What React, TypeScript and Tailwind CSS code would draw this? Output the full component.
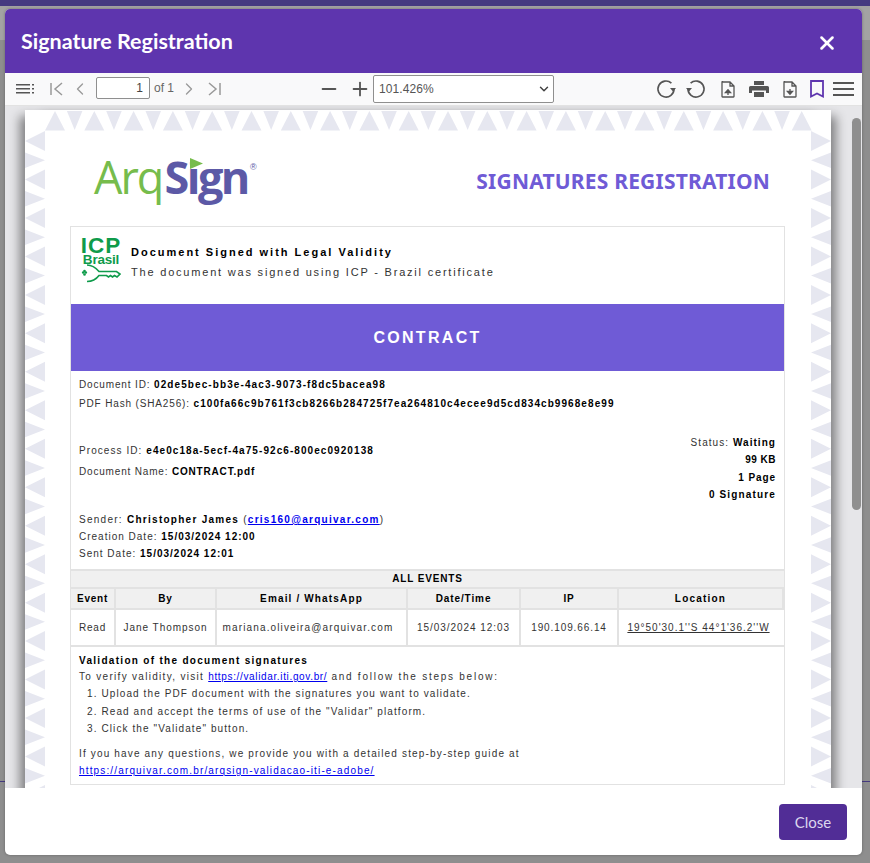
import { ChevronDown, ChevronLeft, ChevronRight, Minus, Plus, X } from 'lucide-react';

const columns = [
  { label: 'Event', track: 'tracking-[0.75px]' },
  { label: 'By', track: 'tracking-[0.75px]' },
  { label: 'Email / WhatsApp', track: 'tracking-[1.15px]' },
  { label: 'Date/Time', track: 'tracking-[0.9px]' },
  { label: 'IP', track: 'tracking-[0.75px]' },
  { label: 'Location', track: 'tracking-[1.2px]' },
];
const values = [
  { label: 'Read', track: 'tracking-[0.75px]' },
  { label: 'Jane Thompson', track: 'tracking-[0.95px]' },
  { label: 'mariana.oliveira@arquivar.com', track: 'pr-[7px] tracking-[1.13px]' },
  { label: '15/03/2024 12:03', track: 'tracking-[0.95px]' },
  { label: '190.109.66.14', track: 'tracking-[0.9px]' },
];

// the triangle frame printed on the pdf page
function FrameTriangles() {
  const top = Array.from({ length: 20 }, (_, i) => 20 + i * 39.3);
  const side = Array.from({ length: 18 }, (_, i) => 31 + i * 38.47);
  return (
    <svg className="absolute inset-0" width="806" height="760" viewBox="0 0 806 760" fill="#e6e7f0">
      {top.map((x) => (
        <polygon key={x} points={`${x},20.500 ${x + 10},1 ${x + 20},20.500`} />
      ))}
      {top.slice(0, 19).map((x) => (
        <polygon key={x} points={`${x + 21.900},1 ${x + 37.400},1 ${x + 29.650},20`} />
      ))}
      {side.map((y) => (
        <g key={y}>
          <polygon points={`0,${y} 20,${y - 10} 20,${y + 10}`} />
          <polygon points={`806,${y} 786,${y - 10} 786,${y + 10}`} />
          <polygon points={`0,${y + 11.500} 20,${y + 19.200} 0,${y + 27}`} />
          <polygon points={`806,${y + 11.500} 786,${y + 19.200} 806,${y + 27}`} />
        </g>
      ))}
    </svg>
  );
}

function IcpLogo() {
  return (
    <div className="flex w-[40px] flex-col items-center pt-[1px] text-[#0f9b4b]">
      <span className="font-['Liberation_Sans'] text-[22.500px] leading-[19px] font-bold">ICP</span>
      <span className="font-['Liberation_Sans'] text-[13.500px] leading-[9px] font-bold tracking-[-0.2px]">Brasil</span>
      <svg width="40" height="19" viewBox="0 0 40 19" fill="none" stroke="currentColor" strokeWidth="1.600">
        <circle cx="2.200" cy="8.500" r="1.300" fill="currentColor" stroke="none" />
        <circle cx="4.800" cy="8.500" r="1.300" fill="currentColor" stroke="none" />
        <circle cx="3.500" cy="7" r="1.300" fill="currentColor" stroke="none" />
        <circle cx="3.500" cy="10.500" r="1.300" fill="currentColor" stroke="none" />
        <path d="M6 1c6 0 9 3 12 6.500h17.500L39 10l-3 3-2.500-1.500-2 1.500-2-1.500-2 1.500-2-1.500H18c-3 4-6 6-12 6" />
      </svg>
    </div>
  );
}

function ArqSignLogo() {
  return (
    <div className="relative mb-[3px] flex items-baseline font-['Open_Sans'] text-[45px] leading-[46px] tracking-[-2px]">
      <span className="font-medium text-[#76bc4c]">Arq</span>
      <span className="ml-[2px] font-bold tracking-[-2.500px] text-[#5c59a6]">Sign</span>
      <span className="mt-[9px] ml-[2px] self-start font-['Liberation_Sans'] text-[9px] leading-[9px] tracking-normal text-[#5c59a6]">
        ®
      </span>
      <svg className="absolute top-[4px] left-[96px]" width="13" height="11" viewBox="0 0 13 11">
        <rect width="13" height="11" fill="#ffffff" />
        <polygon points="0,0 13,5.500 0,11" fill="#76bc4c" />
      </svg>
    </div>
  );
}

function DocumentPage() {
  return (
    <div className="relative mx-auto mt-[4px] h-[760px] w-[806px] bg-white shadow-[-11px_0_10px_-6px_rgba(0,0,0,0.45),11px_0_10px_-6px_rgba(0,0,0,0.45)]">
      <FrameTriangles />
      <div className="relative flex flex-col pt-[20px] pr-[46px] pl-[45px] font-['Liberation_Sans'] text-[10px] leading-[12px] tracking-[1px] text-[#333]">
        <div className="flex h-[96px] items-center justify-between pr-[15px] pl-[24px]">
          <ArqSignLogo />
          <span className="mt-[6px] font-['Noto_Sans'] text-[21px] leading-[24px] font-bold tracking-[0.2px] text-[#6f5bd6]">
            SIGNATURES REGISTRATION
          </span>
        </div>
        <div className="flex flex-col border border-[#e2e2e2]">
          <div className="flex h-[77px] items-start gap-[10px] pt-[8px] pl-[10px]">
            <IcpLogo />
            <div className="flex flex-col gap-[7px] pt-[11px] text-[11px] leading-[13px]">
              <span className="font-bold tracking-[2px] text-black">Document Signed with Legal Validity</span>
              <span className="tracking-[1.800px]">The document was signed using ICP - Brazil certificate</span>
            </div>
          </div>
          <div className="flex h-[67px] items-center justify-center bg-[#6f5bd6] text-[16px] font-bold tracking-[2.300px] text-white">
            CONTRACT
          </div>
          <div className="relative flex h-[198px] flex-col px-[8px] pt-[8px]">
            <p className="tracking-[0.850px]">Document ID: <b className="tracking-[1.100px] text-black">02de5bec-bb3e-4ac3-9073-f8dc5bacea98</b></p>
            <p className="mt-[7px] tracking-[0.850px]">PDF Hash (SHA256): <b className="tracking-[1.070px] text-black">c100fa66c9b761f3cb8266b284725f7ea264810c4ecee9d5cd834cb9968e8e99</b></p>
            <div className="mt-[27px] flex justify-between">
              <div className="flex flex-col gap-[9px] pt-[8px]">
                <p className="tracking-[1.070px]">Process ID: <b className="text-black">e4e0c18a-5ecf-4a75-92c6-800ec0920138</b></p>
                <p className="tracking-[0.820px]">Document Name: <b className="text-black">CONTRACT.pdf</b></p>
              </div>
              <div className="flex flex-col items-end gap-[5.300px] text-right">
                <p className="tracking-[1.050px]">Status: <b className="text-black">Waiting</b></p>
                <b className="tracking-[0.500px] text-black">99 KB</b>
                <b className="tracking-[0.900px] text-black">1 Page</b>
                <b className="tracking-[1.150px] text-black">0 Signature</b>
              </div>
            </div>
            <div className="mt-[13px] flex flex-col gap-[5px]">
              <p className="tracking-[1.270px]">Sender: <b className="text-black">Christopher James</b> (<a className="font-bold text-[#0000ee] underline">cris160@arquivar.com</a>)</p>
              <p>Creation Date: <b className="text-black">15/03/2024 12:00</b></p>
              <p>Sent Date: <b className="text-black">15/03/2024 12:01</b></p>
            </div>
          </div>
          <div className="flex h-[20px] items-center justify-center border-y-2 border-[#e2e2e2] bg-[#f0f0f0] font-bold tracking-[0.850px] text-black">
            ALL EVENTS
          </div>
          <div className="grid grid-cols-[45px_101px_191px_113px_98px_1fr]">
            {columns.map((c) => (
              <div key={c.label} className={`flex h-[21px] items-center justify-center border-r-2 border-b-2 border-[#e2e2e2] bg-[#f0f0f0] font-bold text-black last:border-r-0 ${c.track}`}>
                {c.label}
              </div>
            ))}
            {values.map((v) => (
              <div key={v.label} className={`flex h-[37px] items-center justify-center border-r-2 border-b-2 border-[#e2e2e2] ${v.track}`}>
                {v.label}
              </div>
            ))}
            <div className="flex h-[37px] items-center justify-center border-b-2 border-[#e2e2e2] pr-[6px] tracking-[1px] underline">
              19°50'30.1''S 44°1'36.2''W
            </div>
          </div>
          <div className="flex h-[137px] flex-col px-[8px] pt-[8px]">
            <b className="tracking-[1.300px] text-black">Validation of the document signatures</b>
            <p className="mt-[4px] tracking-[1.300px]">
              To verify validity, visit <a className="tracking-[0.650px] text-[#0000ee] underline">https://validar.iti.gov.br/</a>{' '}
              <span className="tracking-[1.750px]">and follow the steps below:</span>
            </p>
            <ol className="mt-[5px] flex flex-col gap-[5.500px] pl-[8px] tracking-[1.100px]">
              <li>1. Upload the PDF document with the signatures you want to validate.</li>
              <li>2. Read and accept the terms of use of the "Validar" platform.</li>
              <li>3. Click the "Validate" button.</li>
            </ol>
            <p className="mt-[13px] tracking-[1.160px]">If you have any questions, we provide you with a detailed step-by-step guide at</p>
            <a className="mt-[5px] tracking-[1.150px] text-[#0000ee] underline">https://arquivar.com.br/arqsign-validacao-iti-e-adobe/</a>
          </div>
        </div>
      </div>
    </div>
  );
}

function Toolbar() {
  return (
    <div className="flex h-[33px] items-center border-b border-[#e2e2e2] bg-[#f9f9fa] font-['Liberation_Sans'] text-[12px] text-[#666]">
      <svg className="ml-[11px]" width="18" height="12" viewBox="0 0 18 12" fill="#555">
        <path d="M0 1h14v1.600H0zM0 5h14v1.600H0zM0 9h14v1.600H0zM16 1h2v1.600h-2zM16 5h2v1.600h-2zM16 9h2v1.600h-2z" />
      </svg>
      <svg className="ml-[16px]" width="14" height="14" viewBox="0 0 14 14" fill="none" stroke="#999" strokeWidth="1.500">
        <path d="M1 1v12M12 1L5 7l7 6" />
      </svg>
      <ChevronLeft className="ml-[6px] text-[#999]" size={20} strokeWidth={1.600} />
      <input readOnly value="1" className="mb-[3px] ml-[6px] h-[22px] w-[54px] rounded-[2px] border border-[#8f8f8f] bg-white px-[6px] text-right text-[12px] text-[#444]" />
      <span className="mb-[3px] ml-[4px]">of 1</span>
      <ChevronRight className="ml-[5px] text-[#999]" size={20} strokeWidth={1.600} />
      <svg className="ml-[8px]" width="14" height="14" viewBox="0 0 14 14" fill="none" stroke="#999" strokeWidth="1.500">
        <path d="M13 1v12M2 1l7 6-7 6" />
      </svg>
      <Minus className="ml-[97px] text-[#555]" size={22} strokeWidth={2} />
      <Plus className="ml-[9px] text-[#555]" size={22} strokeWidth={2} />
      <div className="ml-[2px] flex h-[28px] w-[181px] items-center justify-between rounded-[2px] border border-[#8f8f8f] bg-white pr-[2px] pl-[5px] tracking-[0.100px] text-[#555]">
        <span>101.426%</span>
        <ChevronDown className="text-[#444]" size={14} strokeWidth={2.500} />
      </div>
      <svg className="ml-[102px]" width="20" height="20" viewBox="0 0 20 20" fill="none" stroke="#555" strokeWidth="1.700">
        <path d="M18 10a8 8 0 1 1-2.600-5.900" />
        <path d="M14 9h6l-3 3.600z" fill="#555" stroke="none" />
      </svg>
      <svg className="ml-[10px]" width="20" height="20" viewBox="0 0 20 20" fill="none" stroke="#555" strokeWidth="1.700">
        <path d="M2 10a8 8 0 1 0 2.600-5.900" />
        <path d="M6 9H0l3 3.600z" fill="#555" stroke="none" />
      </svg>
      <svg className="ml-[15px]" width="14" height="17" viewBox="0 0 14 17" fill="none" stroke="#555" strokeWidth="1.300">
        <path d="M1.500 1h7.500l4 4v10.500a.500.500 0 0 1-.500.500h-11a.500.500 0 0 1-.500-.500v-14.500a.500.500 0 0 1 .500-.500zM9 1v4h4" />
        <path d="M7 14V9.500M4.500 11.500L7 8.800l2.500 2.700z" fill="#555" />
      </svg>
      <svg className="ml-[14px]" width="20" height="16" viewBox="0 0 20 16" fill="#555">
        <path d="M5 0h10v4H5zM1.500 5h17A1.500 1.500 0 0 1 20 6.500V12h-3V9.500H3V12H0V6.500A1.500 1.500 0 0 1 1.500 5zM5 11h10v5H5z" />
      </svg>
      <svg className="ml-[14px]" width="14" height="17" viewBox="0 0 14 17" fill="none" stroke="#555" strokeWidth="1.300">
        <path d="M1.500 1h7.500l4 4v10.500a.500.500 0 0 1-.500.500h-11a.500.500 0 0 1-.500-.500v-14.500a.500.500 0 0 1 .500-.500zM9 1v4h4" />
        <path d="M7 8v4.500M4.500 10.500L7 13.200l2.500-2.700z" fill="#555" />
      </svg>
      <svg className="mb-[1px] ml-[13px]" width="14" height="18" viewBox="0 0 14 18" fill="none" stroke="#5e35ae" strokeWidth="1.800">
        <path d="M1 1h12v15.500l-6-3-6 3z" />
      </svg>
      <svg className="ml-[9px]" width="21" height="14" viewBox="0 0 21 14" fill="#555">
        <path d="M0 0h21v2H0zM0 6h21v2H0zM0 12h21v2H0z" />
      </svg>
    </div>
  );
}

export default function App() {
  return (
    <div className="relative h-[863px] w-[870px] overflow-hidden bg-[#8e8e8e]">
      <div className="h-[6px] bg-[#453a80]" />
      <div className="h-[34px] bg-[#a3a3a3]" />
      <div className="mt-[741px] h-px bg-[#453a80]" />

      <div className="absolute top-[9px] left-[5px] flex h-[846px] w-[857px] flex-col overflow-hidden rounded-[5px] bg-white shadow-[0_0_3px_rgba(0,0,0,0.3)]">
        <div className="flex h-[64px] items-center justify-between bg-[#5e35ae] pr-[24px] pl-[16px] text-white">
          <span className="font-['Lato'] text-[21.500px] leading-[24px] font-bold">Signature Registration</span>
          <X size={22} strokeWidth={2.800} className="mt-[4px]" />
        </div>
        <Toolbar />
        <div className="flex h-[682px] bg-[#e6e6e9]">
          <div className="h-full w-[846px] overflow-hidden pr-[20px] pl-[20px]">
            <DocumentPage />
          </div>
          <div className="flex flex-1 justify-center pt-[12px]">
            <div className="h-[392px] w-[9px] rounded-full bg-[#8f8f8f]" />
          </div>
        </div>
        <div className="flex flex-1 items-start justify-end pt-[16px] pr-[15px]">
          <button className="h-[36px] w-[68px] rounded-[4px] bg-[#512d96] font-['Lato'] text-[15px] text-[#dcd6ee]">Close</button>
        </div>
      </div>
    </div>
  );
}
